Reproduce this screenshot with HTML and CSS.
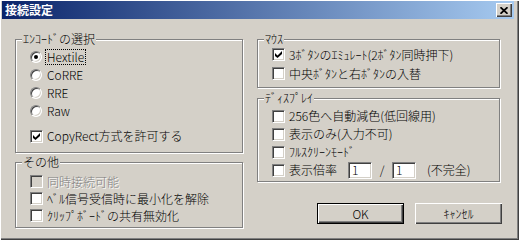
FILE: index.html
```html
<!DOCTYPE html>
<html lang="ja">
<head>
  <meta charset="utf-8" />
  <title>接続設定</title>
  <link rel="stylesheet" href="styles.css">
</head>
<body>
  <div class="window">
    <div class="titlebar">
      <span class="title">接続設定</span>
      <span class="close-btn">
        <svg width="8" height="7" viewBox="0 0 8 7"><path d="M0.5 0.2 L7.5 6.8 M7.5 0.2 L0.5 6.8" stroke="#000" stroke-width="1.7" fill="none"/></svg>
      </span>
    </div>

    <div class="dialog">
      <div class="col col-left">
        <div class="group group-encode">
          <span class="group-title">ｴﾝｺｰﾄﾞの選択</span>
          <div class="opt"><span class="radio on"></span><span class="radio-label focus">Hextile</span></div>
          <div class="opt"><span class="radio"></span><span class="radio-label">CoRRE</span></div>
          <div class="opt"><span class="radio"></span><span class="radio-label">RRE</span></div>
          <div class="opt"><span class="radio"></span><span class="radio-label">Raw</span></div>
          <div class="opt opt-copyrect">
            <span class="check"><svg width="7" height="7" viewBox="0 0 7 7"><polygon points="0,2 2.5,4.5 7,0 7,3 2.5,7 0,5" fill="#000"/></svg></span>
            <span>CopyRect方式を許可する</span>
          </div>
        </div>

        <div class="group group-other">
          <span class="group-title">その他</span>
          <div class="opt disabled"><span class="check"></span><span>同時接続可能</span></div>
          <div class="opt"><span class="check"></span><span>ﾍﾞﾙ信号受信時に最小化を解除</span></div>
          <div class="opt"><span class="check"></span><span>ｸﾘｯﾌﾟﾎﾞｰﾄﾞの共有無効化</span></div>
        </div>
      </div>

      <div class="col col-right">
        <div class="group group-mouse">
          <span class="group-title">ﾏｳｽ</span>
          <div class="opt">
            <span class="check"><svg width="7" height="7" viewBox="0 0 7 7"><polygon points="0,2 2.5,4.5 7,0 7,3 2.5,7 0,5" fill="#000"/></svg></span>
            <span>3ﾎﾞﾀﾝのｴﾐｭﾚｰﾄ(2ﾎﾞﾀﾝ同時押下)</span>
          </div>
          <div class="opt"><span class="check"></span><span>中央ﾎﾞﾀﾝと右ﾎﾞﾀﾝの入替</span></div>
        </div>

        <div class="group group-display">
          <span class="group-title">ﾃﾞｨｽﾌﾟﾚｲ</span>
          <div class="opt"><span class="check"></span><span>256色へ自動減色(低回線用)</span></div>
          <div class="opt"><span class="check"></span><span>表示のみ(入力不可)</span></div>
          <div class="opt"><span class="check"></span><span>ﾌﾙｽｸﾘｰﾝﾓｰﾄﾞ</span></div>
          <div class="opt">
            <span class="check"></span><span>表示倍率</span>
            <span class="field field-first">1</span>
            <span class="slash">/</span>
            <span class="field">1</span>
            <span class="note">(不完全)</span>
          </div>
        </div>

        <div class="buttons">
          <span class="btn btn-default">OK</span>
          <span class="btn">ｷｬﾝｾﾙ</span>
        </div>
      </div>
    </div>
  </div>
</body>
</html>
```

FILE: styles.css
```css
*, *::before, *::after {
  box-sizing: border-box;
}

body {
  margin: 0;
  background: #d4d0c8;
  font-family: "Noto Sans CJK JP", "Liberation Sans", sans-serif;
  font-size: 12px;
  font-weight: 300;
  color: #000;
  overflow: hidden;
}

.window {
  width: 519px;
  height: 240px;
  padding: 1px 5px 0 2px;
  background: #d4d0c8;
  box-shadow: inset 1px 1px #fff, inset -1px -1px #404040, inset -2px -2px #808080;
}

.titlebar {
  height: 18px;
  display: flex;
  align-items: center;
  justify-content: space-between;
  padding: 0 2px 0 3px;
  background: linear-gradient(to right, #0a246a, #a6caf0);
}

.title {
  color: #fff;
  font-weight: bold;
  line-height: 14px;
}

.close-btn {
  width: 16px;
  height: 14px;
  display: flex;
  align-items: center;
  justify-content: center;
  padding-right: 1px;
  background: #d4d0c8;
  box-shadow: inset 1px 1px #fff, inset -1px -1px #404040, inset -2px -2px #808080;
}

.dialog {
  display: flex;
  gap: 14px;
  padding: 20px 0 0 13px;
}

.col {
  display: flex;
  flex-direction: column;
}

.col-left {
  width: 228px;
}

.col-right {
  width: 243px;
}

.group {
  position: relative;
  display: flex;
  flex-direction: column;
  padding-left: 14px;
  border: 1px solid #808080;
  box-shadow: 1px 1px 0 #fff, inset 1px 1px 0 #fff;
}

.group-title {
  position: absolute;
  top: -8px;
  left: 6px;
  padding: 0 1px;
  background: #d4d0c8;
  line-height: 14px;
  white-space: nowrap;
}

.group-encode {
  height: 114px;
  padding-top: 8px;
}

.group-other {
  height: 66px;
  margin-top: 9px;
  padding-top: 10px;
}

.group-mouse {
  height: 49px;
  padding-top: 5px;
}

.group-display {
  height: 84px;
  margin-top: 10px;
  padding-top: 8px;
}

.opt {
  display: flex;
  align-items: center;
  gap: 4px;
  height: 18px;
  line-height: 14px;
  white-space: nowrap;
}

.group-other .opt {
  height: 17px;
}

.group-mouse .opt {
  height: 19px;
}

.opt-copyrect {
  margin-top: 7px;
}

.radio {
  width: 12px;
  height: 12px;
  flex: none;
  display: flex;
  align-items: center;
  justify-content: center;
  border-radius: 50%;
  background: #fff;
  border: 1px solid;
  border-color: #808080 #fff #fff #808080;
  box-shadow: inset 1px 1px #404040, inset -1px -1px #d4d0c8;
}

.radio.on::after {
  content: "";
  width: 4px;
  height: 4px;
  border-radius: 50%;
  background: #000;
}

.radio-label {
  padding: 0 1px;
}

.focus {
  outline: 1px dotted #000;
}

.check {
  width: 13px;
  height: 13px;
  flex: none;
  display: flex;
  align-items: center;
  justify-content: center;
  background: #fff;
  border: 1px solid;
  border-color: #808080 #fff #fff #808080;
  box-shadow: inset 1px 1px #404040, inset -1px -1px #d4d0c8;
}

.disabled {
  color: #808080;
  text-shadow: 1px 1px 0 #fff;
}

.disabled .check {
  background: #d4d0c8;
}

.field {
  width: 24px;
  height: 17px;
  flex: none;
  padding-left: 3px;
  line-height: 14px;
  background: #fff;
  border: 1px solid;
  border-color: #808080 #fff #fff #808080;
  box-shadow: inset 1px 1px #404040, inset -1px -1px #d4d0c8;
}

.field-first {
  margin-left: 7px;
}

.slash {
  width: 12px;
  text-align: center;
}

.note {
  margin-left: 7px;
}

.buttons {
  display: flex;
  justify-content: flex-end;
  gap: 11px;
  margin-top: 21px;
  margin-right: -2px;
}

.btn {
  width: 87px;
  height: 21px;
  display: flex;
  align-items: center;
  justify-content: center;
  line-height: 14px;
  background: #d4d0c8;
  box-shadow: inset 1px 1px #fff, inset -1px -1px #404040, inset -2px -2px #808080;
}

.btn-default {
  border: 1px solid #000;
}
```
